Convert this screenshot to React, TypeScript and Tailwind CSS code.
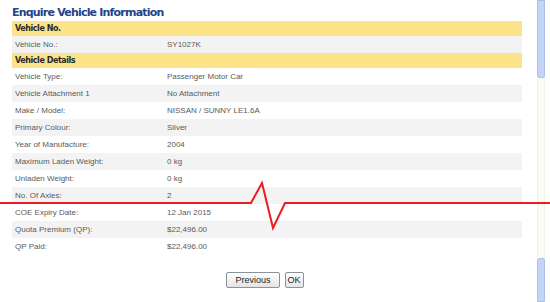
import React from 'react';

type Row = { label: string; value: string };

const vehicleNo: Row[] = [{ label: 'Vehicle No.:', value: 'SY1027K' }];

const details: Row[] = [
  { label: 'Vehicle Type:', value: 'Passenger Motor Car' },
  { label: 'Vehicle Attachment 1', value: 'No Attachment' },
  { label: 'Make / Model:', value: 'NISSAN  / SUNNY LE1.6A' },
  { label: 'Primary Colour:', value: 'Silver' },
  { label: 'Year of Manufacture:', value: '2004' },
  { label: 'Maximum Laden Weight:', value: '0 kg' },
  { label: 'Unladen Weight:', value: '0 kg' },
  { label: 'No. Of Axles:', value: '2' },
  { label: 'COE Expiry Date:', value: '12 Jan 2015' },
  { label: 'Quota Premium (QP):', value: '$22,496.00' },
  { label: 'QP Paid:', value: '$22,496.00' },
];

function SectionHeader({ title }: { title: string }) {
  return (
    <div className="h-[15px] bg-[#fce288] flex items-center pl-[3px] font-['DejaVu_Sans',sans-serif] font-bold text-[8px] tracking-[-0.45px] text-[#2a2a2a]">
      {title}
    </div>
  );
}

function DataRow({ row, shaded }: { row: Row; shaded: boolean }) {
  return (
    <div className={`h-[17px] flex items-center text-[8px] text-[#5a5a5a] ${shaded ? 'bg-[#f3f3f3]' : 'bg-white'}`}>
      <div className="w-[155px] pl-[3px]">{row.label}</div>
      <div>{row.value}</div>
    </div>
  );
}

function Button({ children, wide }: { children: React.ReactNode; wide?: boolean }) {
  return (
    <button
      className={`h-[16px] border border-[#8a929c] rounded-[2px] bg-gradient-to-b from-white to-[#e4e4e4] text-[9px] leading-none text-[#222] font-['Liberation_Sans',sans-serif] ${wide ? 'px-[8px]' : 'px-[2px]'}`}
    >
      {children}
    </button>
  );
}

export default function App() {
  return (
    <div className="relative w-[550px] h-[302px] overflow-hidden bg-white flex font-['Liberation_Sans',Arial,sans-serif]">
      {/* page content */}
      <div className="w-[535px] pl-[12px] pr-[13px] flex flex-col">
        <h1 className="h-[21px] pt-[6px] font-['DejaVu_Sans',sans-serif] font-bold text-[11px] leading-[14px] text-[#23428a] tracking-[-0.8px]">
          Enquire Vehicle Information
        </h1>
        <SectionHeader title="Vehicle No." />
        {vehicleNo.map((r) => (
          <DataRow key={r.label} row={r} shaded />
        ))}
        <SectionHeader title="Vehicle Details" />
        {details.map((r, i) => (
          <DataRow key={r.label} row={r} shaded={i % 2 === 1} />
        ))}
        <div className="flex justify-center gap-[5px] mt-[17px] pr-[4px]">
          <Button wide>Previous</Button>
          <Button>OK</Button>
        </div>
      </div>

      {/* scrollbar */}
      <div className="w-[15px] flex flex-col pl-[2px] pr-[5px]">
        <div className="h-[78px] bg-[#c3d5f6] border border-[#aebfe6] rounded-b-[2px]" />
        <div className="flex-1 bg-[#fbfbf4] border-x border-[#f1f1e6]" />
        <div className="h-[44px] bg-[#c3d5f6] border border-[#aebfe6] rounded-t-[2px]" />
      </div>

      {/* torn-page marker */}
      <svg className="absolute left-0 top-0 pointer-events-none" width="550" height="302" viewBox="0 0 550 302">
        <polyline
          points="0,203 251,203 262,183 273,228 285,203 550,203"
          fill="none"
          stroke="#ea1c24"
          strokeWidth="2"
          strokeLinejoin="miter"
        />
      </svg>
    </div>
  );
}
